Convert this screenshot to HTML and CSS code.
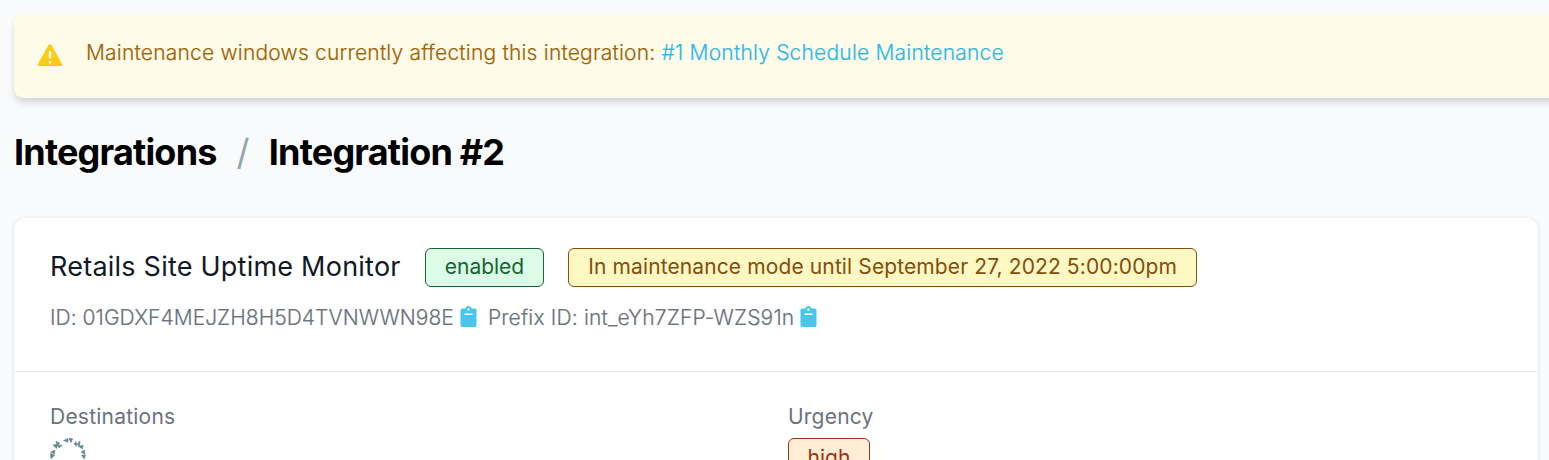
FILE: index.html
```html
<!DOCTYPE html>
<html lang="en">
<head>
<meta charset="utf-8">
<title>Integration #2</title>
<link rel="stylesheet" href="styles.css">
</head>
<body>
<main class="page">
  <div class="alert">
    <svg class="alert-icon" viewBox="0 0 26 23"><path fill="#facc15" d="M11.400 1.200c.8-1.300 2.400-1.300 3.200 0l10.600 19c.7 1.200.1 1.900-1.200 1.900H2c-1.300 0-1.900-.7-1.200-1.900z"/><path fill="none" stroke="#fefce8" stroke-width="2.400" stroke-linecap="round" d="M13 8v5.500M13 18.300v.1"/></svg>
    <p class="alert-text">Maintenance windows currently affecting this integration: <a class="link">#1 Monthly Schedule Maintenance</a></p>
  </div>
  <h1 class="heading"><span class="crumb">Integrations</span><span class="slash">/</span><span class="current">Integration #2</span></h1>
  <section class="card">
    <header class="card-header">
      <div class="title-row">
        <h2 class="title">Retails Site Uptime Monitor</h2>
        <span class="badge green">enabled</span>
        <span class="badge yellow">In maintenance mode until September 27, 2022 5:00:00pm</span>
      </div>
      <div class="id-row">
        <span class="id-main">ID: 01GDXF4MEJZH8H5D4TVNWWN98E</span>
        <svg class="clip" viewBox="0 0 16 22"><path fill="#4ac6ed" fill-rule="evenodd" d="M1.500 2.500h3.300C5.300 1 6.500 0 8 0s2.700 1 3.200 2.500h3.300A1.500 1.500 0 0 1 16 4v15.500a1.500 1.500 0 0 1-1.500 1.500h-13A1.500 1.500 0 0 1 0 19.500V4a1.500 1.500 0 0 1 1.500-1.500zM8 2.300a1.200 1.200 0 1 0 0 2.400 1.200 1.200 0 0 0 0-2.400zM4 7.500V9h8V7.500z"/></svg>
        <span class="id-prefix">Prefix ID: int_eYh7ZFP-WZS91n</span>
        <svg class="clip" viewBox="0 0 16 22"><path fill="#4ac6ed" fill-rule="evenodd" d="M1.500 2.500h3.300C5.300 1 6.500 0 8 0s2.700 1 3.200 2.500h3.300A1.500 1.500 0 0 1 16 4v15.500a1.500 1.500 0 0 1-1.500 1.500h-13A1.500 1.500 0 0 1 0 19.500V4a1.500 1.500 0 0 1 1.500-1.500zM8 2.300a1.200 1.200 0 1 0 0 2.400 1.200 1.200 0 0 0 0-2.400zM4 7.500V9h8V7.500z"/></svg>
      </div>
    </header>
    <dl class="details">
      <div class="detail">
        <dt class="label">Destinations</dt>
        <dd class="value"><svg class="spinner" viewBox="0 0 36 36"><path fill="#64868e" stroke="#64868e" stroke-width=".5" d="M13.500 2.500l4.500-2v3.800zM18.800.5h4l-1.800 4.300zM6 3l4 2.500-3 2zM3 7l5-1-1.500 4.500zM7.500 7.500l5-.5-3.500 3zM26 3.500l1 5-3-2.500zM30 3l-.5 6-2.500-3zM28.500 8.500l4.500-1.500-.5 4zM.5 14l4.500-2-.5 4zM.3 15.500l4.500 1.500L1 21zM31 14l3.500-2 .5 4.500zM31.500 17h4.200l-1.500 4zM2 23l4 1-3 4zM34 23l-4 1 3 4zM6 29l4 1-2 3zM30 29l-4 1 2 3zM13 32l5 2-4 2zM20 32l4 1-4 3z"/></svg></dd>
      </div>
      <div class="detail">
        <dt class="label">Urgency</dt>
        <dd class="value"><span class="badge orange">high</span></dd>
      </div>
    </dl>
  </section>
</main>
</body>
</html>
```
FILE: styles.css
```css
* { box-sizing: border-box; }
html, body { margin: 0; height: 460px; overflow: hidden; }
body { background: #f9fafc; color: #000; font: 400 21px/30px Inter, "Liberation Sans", sans-serif; }
h1, h2, p, dl, dd { margin: 0; }
svg { display: block; flex: none; }
.page { height: 460px; padding: 14px 11px 0 14px; overflow: hidden; }
.alert { display: flex; height: 84px; margin-right: -36px; padding: 24px; border-radius: 9px; background: #fefce8; box-shadow: 0 6px 9px -1px rgb(0 0 0 / .1), 0 3px 6px -2px rgb(0 0 0 / .1); }
.alert-icon { width: 26px; height: 23px; margin: 6px 0 0 -1px; }
.alert-text { margin-left: 23px; color: #a16207; font-weight: 300; letter-spacing: .205px; white-space: nowrap; -webkit-text-stroke: .2px; }
.link { color: #2fb7e6; }
.heading { display: flex; height: 54px; margin-top: 27px; font-size: 36px; line-height: 54px; font-weight: 700; letter-spacing: -.8px; white-space: nowrap; }
.slash { margin: 0 20px; color: #9ca3af; font-weight: 400; }
.card { height: 400px; margin-top: 39px; border-radius: 12px; background: #fff; box-shadow: 0 1px 4px rgb(0 0 0 / .1), 0 1px 3px rgb(0 0 0 / .04); }
.card-header { height: 154px; padding: 30px 36px; border-bottom: 1px solid #e5e7eb; }
.title-row { display: flex; align-items: center; gap: 24px; height: 39px; white-space: nowrap; }
.title { padding-bottom: 2px; color: #111827; font-size: 27px; line-height: 36px; font-weight: 400; letter-spacing: .23px; }
.badge { display: inline-flex; align-items: center; height: 39px; padding: 0 19px 2px; border: 1px solid; border-radius: 6px; line-height: 30px; white-space: nowrap; }
.green { color: #166534; background: #dcfce7; }
.yellow { color: #854d0e; background: #fef9c3; letter-spacing: .115px; }
.orange { padding: 0 18.500px; color: #9a3412; background: #ffedd5; }
.id-row { display: flex; height: 30px; margin-top: 16px; color: #6b7280; font-weight: 300; white-space: nowrap; -webkit-text-stroke: .2px; }
.id-main { letter-spacing: .035px; }
.id-prefix { letter-spacing: .17px; }
.clip { width: 17px; height: 22px; margin: 3px 11px 0 6px; }
.details { display: grid; grid-template-columns: 1fr 1fr; gap: 24px; padding: 30px 36px; }
.label { color: #6b7280; letter-spacing: .22px; }
.value { display: flex; margin-top: 6px; }
.spinner { width: 36px; height: 36px; }
```
